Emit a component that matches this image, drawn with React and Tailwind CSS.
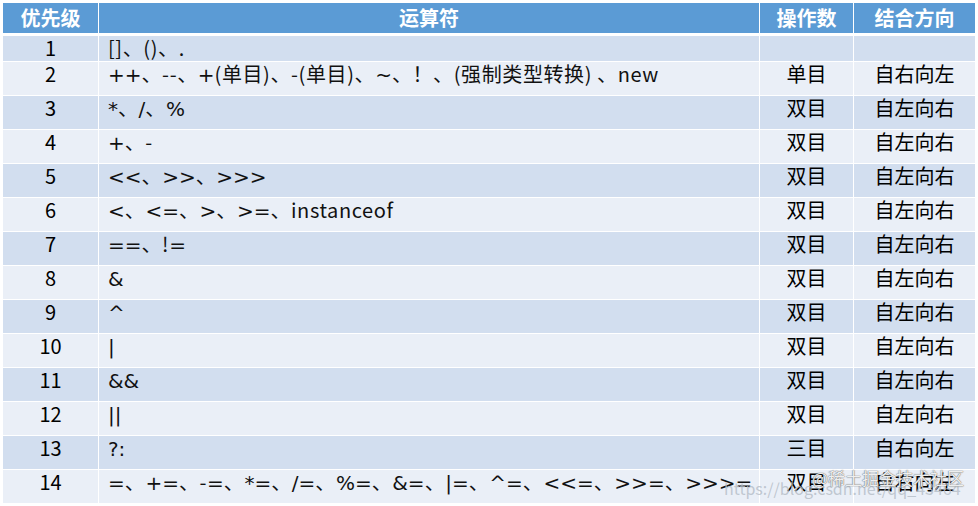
const rows = [
  ["1", "[]、()、.", "", ""],
  ["2", "++、--、+(单目)、-(单目)、~、！、(强制类型转换) 、new", "单目", "自右向左"],
  ["3", "*、/、%", "双目", "自左向右"],
  ["4", "+、-", "双目", "自左向右"],
  ["5", "<<、>>、>>>", "双目", "自左向右"],
  ["6", "<、<=、>、>=、instanceof", "双目", "自左向右"],
  ["7", "==、!=", "双目", "自左向右"],
  ["8", "&", "双目", "自左向右"],
  ["9", "^", "双目", "自左向右"],
  ["10", "|", "双目", "自左向右"],
  ["11", "&&", "双目", "自左向右"],
  ["12", "||", "双目", "自左向右"],
  ["13", "?:", "三目", "自右向左"],
  ["14", "=、+=、-=、*=、/=、%=、&=、|=、^=、<<=、>>=、>>>=", "双目", "自右向左"],
];

// the operators in the screenshot use a wide symbol font
const wide = "+*/%<>=&^?:|~";

function Ops({ text }) {
  const parts = [];
  let cur = "";
  let curWide = null;
  for (const ch of text) {
    const w = wide.includes(ch);
    if (curWide !== null && w !== curWide) {
      parts.push([cur, curWide]);
      cur = "";
    }
    cur += ch;
    curWide = w;
  }
  if (cur) parts.push([cur, curWide]);
  return parts.map(([t, w], i) =>
    w ? (
      <span key={i} style={{ fontFamily: '"DejaVu Sans", sans-serif' }}>
        {t}
      </span>
    ) : (
      <span key={i} className="tracking-[0.6px]">{t}</span>
    )
  );
}

export default function App() {
  return (
    <div
      className="relative w-[978px] h-[506px] overflow-hidden bg-white pl-[3px] pt-[3px] text-black"
      style={{ fontFamily: '"Noto Sans CJK SC", "Noto Sans", sans-serif' }}
    >
      <div className="grid grid-cols-[95px_660px_93px_121px] gap-x-[1px] text-[20px]">
        <div className="h-[30px] bg-[#5b9bd5] text-white font-bold flex items-center justify-center leading-none">优先级</div>
        <div className="h-[30px] bg-[#5b9bd5] text-white font-bold flex items-center justify-center leading-none">运算符</div>
        <div className="h-[30px] bg-[#5b9bd5] text-white font-bold flex items-center justify-center leading-none">操作数</div>
        <div className="h-[30px] bg-[#5b9bd5] text-white font-bold flex items-center justify-center leading-none">结合方向</div>
      </div>
      <div className="mt-[3px] flex flex-col gap-y-[1px]">
        {rows.map((r, i) => {
          const bg = i % 2 === 0 ? "bg-[#d2deef]" : "bg-[#eaeff7]";
          const h = i === 0 ? "h-[25px]" : "h-[33px]";
          return (
            <div key={r[0]} className="grid grid-cols-[95px_660px_93px_121px] gap-x-[1px] text-[20px] leading-[24px]">
              <div className={`${bg} ${h} text-center`}>{r[0]}</div>
              <div className={`${bg} ${h} pl-[9px] whitespace-pre text-[#111]`}>
                <Ops text={r[1]} />
              </div>
              <div className={`${bg} ${h} text-center`}>{r[2]}</div>
              <div className={`${bg} ${h} text-center`}>{r[3]}</div>
            </div>
          );
        })}
      </div>
      <div className="absolute left-[724px] top-[480px] text-[16px] leading-none text-[#b4bcc6]/80">
        https://blog.csdn.net/qq_43464
      </div>
      <div className="absolute left-[812px] top-[469px] text-[17px] leading-none text-white/90 [text-shadow:0_0_1px_rgba(60,60,60,0.7),0_0_1px_rgba(60,60,60,0.7)]">
        @稀土掘金技术社区
      </div>
    </div>
  );
}
